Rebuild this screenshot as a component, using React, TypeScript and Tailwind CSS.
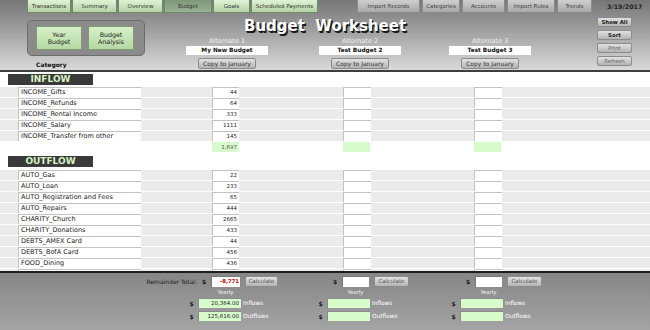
import React from "react";

const leftTabs = [
  { label: "Transactions", w: "w-[44px]" },
  { label: "Summary", w: "w-[45px]" },
  { label: "Overview", w: "w-[45px]" },
  { label: "Budget", w: "w-[48px]", active: true },
  { label: "Goals", w: "w-[37px]" },
  { label: "Scheduled Payments", w: "w-[67px]" },
];

const rightTabs = [
  { label: "Import Records", w: "w-[63px]" },
  { label: "Categories", w: "w-[38px]" },
  { label: "Accounts", w: "w-[43px]" },
  { label: "Import Rules", w: "w-[48px]" },
  { label: "Trends", w: "w-[35px]" },
];

const inflow = [
  ["INCOME_Gifts", "44"],
  ["INCOME_Refunds", "64"],
  ["INCOME_Rental Income", "333"],
  ["INCOME_Salary", "1111"],
  ["INCOME_Transfer from other", "145"],
];

const outflow = [
  ["AUTO_Gas", "22"],
  ["AUTO_Loan", "233"],
  ["AUTO_Registration and Fees", "65"],
  ["AUTO_Repairs", "444"],
  ["CHARITY_Church", "2665"],
  ["CHARITY_Donations", "433"],
  ["DEBTS_AMEX Card", "44"],
  ["DEBTS_BofA Card", "456"],
  ["FOOD_Dining", "436"],
  ["FOOD_Groceries", "552"],
  ["HOME_Utilities", "120"],
];

const field = "h-[10px] shrink-0 bg-white border-t border-l border-[#c2c2c2]";
const grayBtn =
  "shrink-0 flex items-center justify-center rounded-[2px] border border-[#8c8c8c] bg-gradient-to-b from-[#e2e2e2] to-[#b4b4b4] whitespace-nowrap";

/* ── 행 ── */
function Row({ name, amt }: { name: string; amt: string }) {
  return (
    <div className="flex h-[11px] shrink-0 border-b border-white bg-[#ebebeb]">
      <div className={`${field} ml-[18px] w-[123px] overflow-hidden whitespace-nowrap pl-[2px] text-[6.5px] leading-[9px] text-[#222]`}>
        {name}
      </div>
      <div className={`${field} ml-[71px] w-[27px] pr-[2px] text-right text-[5.5px] leading-[9px] text-[#222]`}>{amt}</div>
      <div className={`${field} ml-[104px] w-[28px]`} />
      <div className={`${field} ml-[103px] w-[28px]`} />
    </div>
  );
}

function SectionHead({ label }: { label: string }) {
  return (
    <div className="ml-[8px] flex h-[11px] w-[85px] shrink-0 items-center justify-center bg-[#3a3a3a] text-[9px] font-bold leading-none text-[#d6f3c6]">
      {label}
    </div>
  );
}

function Alternate({ n, name, ml }: { n: number; name: string; ml: string }) {
  return (
    <div className={`${ml} flex w-[82px] flex-col items-center`}>
      <div className="h-[8px] text-[6.5px] leading-[8px] text-[#f0f0f0]">Alternate {n}</div>
      <div className="mt-[1px] flex h-[9px] w-[82px] items-center justify-center bg-white text-[5.8px] font-bold text-[#111]">
        {name}
      </div>
      <div className={`${grayBtn} mt-[3px] h-[11px] w-[58px] text-[6px] text-[#333]`}>Copy to January</div>
    </div>
  );
}

export default function App() {
  return (
    <div className="flex h-[330px] w-[650px] flex-col overflow-hidden bg-white font-['DejaVu_Sans',sans-serif]">
      {/* Header */}
      <div className="flex h-[72px] shrink-0 flex-col border-b-2 border-[#3e3e3e] bg-gradient-to-b from-[#767676] to-[#dadada]">
        {/* Tabs */}
        <div className="flex h-[13px] shrink-0 items-stretch">
          <div className="ml-[27px] flex gap-[1px]">
            {leftTabs.map((t) => (
              <div
                key={t.label}
                className={`${t.w} flex items-center justify-center whitespace-nowrap border border-t-0 border-[#6f8a66] text-[5.5px] text-[#333] ${
                  t.active ? "bg-gradient-to-b from-[#7f9879] to-[#9bb195]" : "bg-gradient-to-b from-[#e0f3d6] to-[#b4d3a4]"
                }`}
              >
                {t.label}
              </div>
            ))}
          </div>
          <div className="ml-[39px] flex gap-[2px]">
            {rightTabs.map((t) => (
              <div
                key={t.label}
                className={`${t.w} flex items-center justify-center whitespace-nowrap border border-t-0 border-[#8a8a8a] bg-gradient-to-b from-[#cfcfcf] to-[#a9a9a9] text-[5.5px] text-[#444]`}
              >
                {t.label}
              </div>
            ))}
          </div>
          <div className="ml-[15px] flex items-center text-[6.3px] font-bold text-[#222]">3/19/2017</div>
        </div>

        <div className="flex flex-1">
          {/* Left panel */}
          <div className="flex w-[145px] shrink-0 flex-col">
            <div className="ml-[27px] mt-[7px] flex h-[36px] w-[118px] items-center gap-[6px] rounded-[5px] border border-[#6c6c6c] bg-[#8b8b8b] pl-[8px]">
              {["Year|Budget", "Budget|Analysis"].map((l) => (
                <div
                  key={l}
                  className="flex h-[24px] w-[46px] flex-col items-center justify-center border border-[#7f9c70] bg-gradient-to-b from-[#d6f0c8] to-[#b6d8a4] text-[6.3px] leading-[7px] text-[#222]"
                >
                  <span>{l.split("|")[0]}</span>
                  <span>{l.split("|")[1]}</span>
                </div>
              ))}
            </div>
            <div className="ml-[36px] mt-[5px] text-[6px] font-bold leading-[8px] text-[#111]">Category</div>
          </div>

          {/* Title + alternates */}
          <div className="flex flex-1 flex-col">
            <div className="mt-[2px] h-[22px] whitespace-pre pl-[99px] text-[15px] font-bold leading-[22px] text-white [text-shadow:1px_1px_0_#1a1a1a,1.5px_1.5px_0_#1a1a1a]">
              {"Budget  Worksheet"}
            </div>
            <div className="flex">
              <Alternate n={1} name="My New Budget" ml="ml-[41px]" />
              <Alternate n={2} name="Test Budget 2" ml="ml-[51px]" />
              <Alternate n={3} name="Test Budget 3" ml="ml-[48px]" />
            </div>
          </div>

          {/* Right buttons */}
          <div className="flex w-[53px] shrink-0 flex-col gap-[3px] pt-[4px]">
            {[
              ["Show All", "text-[#222] font-bold"],
              ["Sort", "text-[#222] font-bold"],
              ["Print", "text-[#666]"],
              ["Refresh", "text-[#666]"],
            ].map(([l, c]) => (
              <div key={l} className={`${grayBtn} h-[10px] w-[35px] text-[5.4px] ${c}`}>
                {l}
              </div>
            ))}
          </div>
        </div>
      </div>

      {/* Body */}
      <div className="flex flex-1 flex-col overflow-hidden pt-[2px]">
        <SectionHead label="INFLOW" />
        <div className="mt-[2px] flex flex-col">
          {inflow.map(([n, a]) => (
            <Row key={n} name={n} amt={a} />
          ))}
        </div>
        <div className="flex h-[10px] shrink-0">
          <div className="ml-[212px] h-[10px] w-[27px] bg-[#d8fbcb] pr-[2px] text-right text-[5.5px] leading-[10px] text-[#555]">1,697</div>
          <div className="ml-[104px] h-[10px] w-[27px] bg-[#d8fbcb]" />
          <div className="ml-[104px] h-[10px] w-[27px] bg-[#d8fbcb]" />
        </div>
        <div className="mt-[4px]">
          <SectionHead label="OUTFLOW" />
        </div>
        <div className="mt-[3px] flex flex-col">
          {outflow.map(([n, a]) => (
            <Row key={n} name={n} amt={a} />
          ))}
        </div>
      </div>

      {/* Footer */}
      <div className="flex h-[59px] shrink-0 flex-col border-t-2 border-[#1e1e1e] bg-gradient-to-b from-[#868686] to-[#a4a4a4] pt-[3px] text-[#222]">
        <div className="flex h-[11px] items-center">
          <div className="w-[197px] whitespace-nowrap text-right text-[6px]">Remainder Total:</div>
          <div className="w-[14px] text-center text-[6px] font-bold">$</div>
          <div className="flex h-[11px] w-[29px] items-center justify-end border-t border-l border-[#777] bg-white pr-[1px] text-[5.3px] font-bold text-[#c00000]">
            -8,771
          </div>
          <div className={`${grayBtn} ml-[5px] h-[11px] w-[33px] text-[5.6px] text-[#555]`}>Calculate</div>
          <div className="ml-[50px] w-[14px] text-center text-[6px] font-bold">$</div>
          <div className="h-[11px] w-[27px] border-t border-l border-[#777] bg-white" />
          <div className={`${grayBtn} ml-[5px] h-[11px] w-[35px] text-[5.6px] text-[#555]`}>Calculate</div>
          <div className="ml-[52px] w-[14px] text-center text-[6px] font-bold">$</div>
          <div className="h-[11px] w-[27px] border-t border-l border-[#777] bg-white" />
          <div className={`${grayBtn} ml-[5px] h-[11px] w-[35px] text-[5.6px] text-[#555]`}>Calculate</div>
        </div>

        <div className="flex h-[10px] items-center text-[5.4px] text-[#f2f2f2]">
          <div className="ml-[211px] w-[29px] whitespace-nowrap text-center">Yearly</div>
          <div className="ml-[102px] w-[27px] whitespace-nowrap text-center">Yearly</div>
          <div className="ml-[106px] w-[27px] whitespace-nowrap text-center">Yearly</div>
        </div>

        {[
          ["Inflows", "20,364.00", "mt-[1px]"],
          ["Outflows", "125,616.00", "mt-[3px]"],
        ].map(([label, val, mt]) => (
          <div key={label} className={`${mt} flex h-[10px] items-center`}>
            <div className="ml-[185px] w-[13px] text-center text-[6px] font-bold">$</div>
            <div className="flex h-[10px] w-[43px] items-center justify-end border-t border-l border-[#8a8a8a] bg-[#d8fbcb] pr-[2px] text-[5.5px]">
              {val}
            </div>
            <div className="w-[73px] pl-[2px] text-[5.8px] text-white">{label}</div>
            <div className="w-[13px] text-center text-[6px] font-bold">$</div>
            <div className="h-[10px] w-[43px] border-t border-l border-[#8a8a8a] bg-[#d8fbcb]" />
            <div className="w-[77px] pl-[2px] text-[5.8px] text-white">{label}</div>
            <div className="w-[13px] text-center text-[6px] font-bold">$</div>
            <div className="h-[10px] w-[43px] border-t border-l border-[#8a8a8a] bg-[#d8fbcb]" />
            <div className="pl-[2px] text-[5.8px] text-white">{label}</div>
          </div>
        ))}
      </div>
    </div>
  );
}
